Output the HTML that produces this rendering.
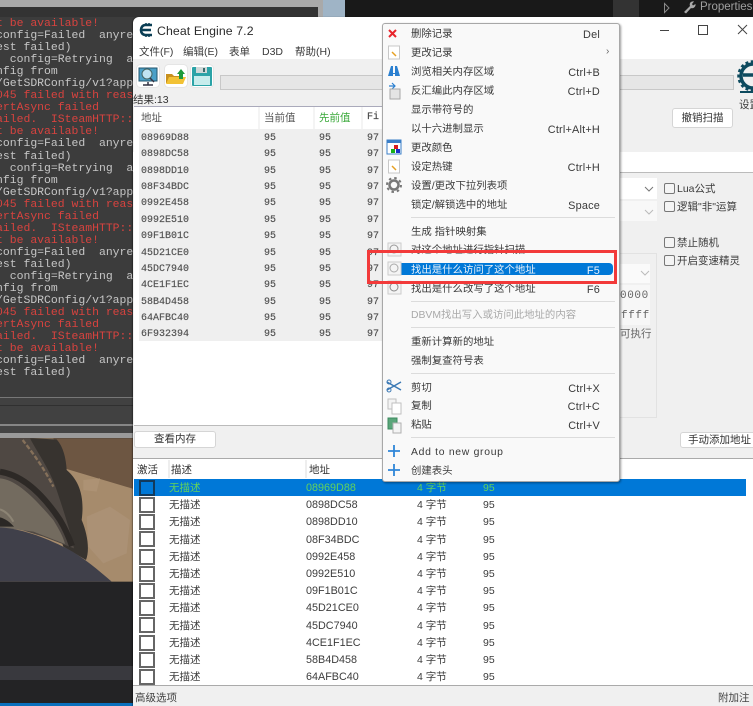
<!DOCTYPE html>
<html><head><meta charset="utf-8"><style>
html,body{margin:0;padding:0;width:753px;height:706px;overflow:hidden;background:#222}
#r{position:relative;width:753px;height:706px;overflow:hidden;filter:blur(.35px);font-family:"Liberation Sans","Noto Sans CJK SC",sans-serif;font-size:10.5px;color:#333}
#r div,#r span.a{position:absolute;white-space:pre}
.t{left:-4px;margin-top:2px;font:11.45px/12px "Liberation Mono",monospace;color:#c6c6c6}
.e{color:#d8433f}
.m{margin-top:2px;font:10px/12px "Liberation Mono",monospace;color:#505050;-webkit-text-stroke:.15px #505050}
.mi{left:411px;margin-top:4px;line-height:14px;color:#3a3a3a;font-size:10.4px}
.ms{right:153px;margin-top:4px;line-height:14px;color:#3a3a3a;font-size:10.9px;letter-spacing:.2px}
.sep{left:411px;width:204px;height:1px;background:#dcdcdc}
.cb{left:139px;width:12px;height:12px;border:2px solid #666;background:#fff}
.d{left:169px;margin-top:1px;line-height:14px;color:#3c3c3c}
.ad{left:306px;margin-top:1px;line-height:14px;color:#3c3c3c;font-size:10.8px}
.ty{left:417px;margin-top:1px;line-height:14px;color:#3c3c3c}
.v{left:483px;margin-top:1px;line-height:14px;color:#3c3c3c}
.btn{background:#fff;border:1px solid #d5d5d5;border-radius:3px;text-align:center;box-sizing:border-box;color:#333}
.ck{left:664px;width:9px;height:9px;border:1px solid #777;border-radius:2px;background:#f4f4f4}
.lb{left:677px;margin-top:1px;line-height:14px;color:#3c3c3c}
.hs{width:2px;background:#f4f4f4}
</style></head><body><div id="r">
<!-- desktop background -->
<div style="left:0;top:0;width:323px;height:7px;background:#a9a9a9"></div>
<div style="left:0;top:7px;width:318px;height:10px;background:#333"></div>
<div style="left:318px;top:7px;width:5px;height:10px;background:#a9a9a9"></div>
<div style="left:323px;top:0;width:22px;height:17px;background:#9fb4c6"></div>
<div style="left:345px;top:0;width:408px;height:17px;background:#191919"></div>
<div style="left:613px;top:0;width:26px;height:17px;background:#333"></div>
<svg style="position:absolute;left:663px;top:2px" width="8" height="12"><path d="M1.500 1.500L6 6L1.500 10.500Z" fill="none" stroke="#8a8a8a"/></svg>
<svg style="position:absolute;left:682px;top:0" width="15" height="14"><path d="M2 12L8 6C7 3 9 1 12 1.500L10 4L11 5.500L13.500 4C14 7 11 9 9 8L4 13.500Z" fill="#a8a8a8"/></svg>
<div style="left:700px;top:0;font-size:11.5px;line-height:14px;color:#a0a0a0">Properties</div>
<div style="left:0;top:17px;width:318px;height:380px;background:#3c3c3c"></div>
<div class="t e" style="top:16px">t be available!</div>
<div class="t" style="top:28px">config=Failed  anyre</div>
<div class="t" style="top:40px">est failed)</div>
<div class="t" style="top:52px">  config=Retrying  a</div>
<div class="t" style="top:64px">nfig from</div>
<div class="t" style="top:76px">/GetSDRConfig/v1?app</div>
<div class="t e" style="top:88px">045 failed with reas</div>
<div class="t e" style="top:100px">ertAsync failed</div>
<div class="t e" style="top:112px">ailed.  ISteamHTTP::</div>
<div class="t e" style="top:124px">t be available!</div>
<div class="t" style="top:136px">config=Failed  anyre</div>
<div class="t" style="top:149px">est failed)</div>
<div class="t" style="top:161px">  config=Retrying  a</div>
<div class="t" style="top:173px">nfig from</div>
<div class="t" style="top:185px">/GetSDRConfig/v1?app</div>
<div class="t e" style="top:197px">045 failed with reas</div>
<div class="t e" style="top:209px">ertAsync failed</div>
<div class="t e" style="top:221px">ailed.  ISteamHTTP::</div>
<div class="t e" style="top:233px">t be available!</div>
<div class="t" style="top:245px">config=Failed  anyre</div>
<div class="t" style="top:257px">est failed)</div>
<div class="t" style="top:269px">  config=Retrying  a</div>
<div class="t" style="top:281px">nfig from</div>
<div class="t" style="top:293px">/GetSDRConfig/v1?app</div>
<div class="t e" style="top:305px">045 failed with reas</div>
<div class="t e" style="top:317px">ertAsync failed</div>
<div class="t e" style="top:329px">ailed.  ISteamHTTP::</div>
<div class="t e" style="top:341px">t be available!</div>
<div class="t" style="top:353px">config=Failed  anyre</div>
<div class="t" style="top:365px">est failed)</div>
<div style="left:0;top:397px;width:133px;height:1px;background:#777"></div>
<div style="left:0;top:398px;width:133px;height:26px;background:#414141"></div>
<div style="left:0;top:405px;width:133px;height:1px;background:#303030"></div>
<div style="left:0;top:424px;width:133px;height:2px;background:#868686"></div>
<div style="left:0;top:426px;width:133px;height:7px;background:#444"></div>
<div style="left:0;top:433px;width:133px;height:5px;background:#9a9a9a"></div>
<!-- photo: path coordinates in 3x units -->
<svg style="position:absolute;left:0;top:420px" width="135" height="180" viewBox="0 0 405 540">
<rect x="0" y="55" width="405" height="430" fill="#a68b6c"/>
<path d="M160 55H405V208L200 147Z" fill="#6d5642"/>
<path d="M250 180L300 175L290 215L250 210Z" fill="#ad9274"/>
<path d="M260 290L330 260L390 300L380 400L310 430L265 380Z" fill="#ab9175"/>
<path d="M90 55L170 58C190 80 198 115 200 150C235 180 255 225 245 300C262 340 270 390 258 420L190 380L100 120Z" fill="#37332f"/>
<path d="M0 55H90C120 110 150 150 170 210C190 270 210 330 222 385L130 350L0 310Z" fill="#4f4843"/>
<path d="M0 175C50 180 100 230 160 300C175 325 190 350 195 372L100 335L0 322Z" fill="#736b5f"/>
<path d="M0 155C70 165 130 225 180 300C198 330 208 355 216 378" fill="none" stroke="#2d2926" stroke-width="18"/>
<path d="M0 292C15 295 32 308 42 320L0 320Z" fill="#2b2825"/>
<path d="M0 268C20 275 32 290 40 305" fill="none" stroke="#8c8474" stroke-width="6"/>
<path d="M68 60C95 95 130 140 160 200" fill="none" stroke="#85705a" stroke-width="7" stroke-dasharray="14 6"/>
<path d="M0 322C60 325 130 350 200 385C250 412 295 450 335 485H0Z" fill="#40404a"/>
</svg>
<div style="left:0;top:582px;width:133px;height:124px;background:#232325"></div>
<div style="left:0;top:666px;width:133px;height:14px;background:#39393e"></div>
<div style="left:0;top:703px;width:133px;height:3px;background:#0a70bd"></div>
<!-- CE window -->
<div style="left:133px;top:17px;width:620px;height:689px;background:#fff;border-radius:6px 0 0 0;box-shadow:-1px 0 1px rgba(0,0,0,.35)"></div>
<svg style="position:absolute;left:139px;top:22px" width="15" height="16" viewBox="0 0 15 16">
<path d="M13 3H6.500C3.500 3 2 5.500 2 8s1.500 5 4.500 5H13M3 8H12" fill="none" stroke="#0b3f55" stroke-width="2.600"/>
<path d="M7 1v2M10 1v2M7 13v2M10 13v2" stroke="#0b3f55" stroke-width="1.500"/>
</svg>
<div style="left:157px;top:23px;font-size:12.3px;line-height:16px;color:#2b2b2b;letter-spacing:.1px">Cheat Engine 7.2</div>
<!-- caption buttons -->
<div style="left:660px;top:30px;width:9px;height:1px;background:#444"></div>
<div style="left:698px;top:25px;width:8px;height:8px;border:1px solid #444"></div>
<svg style="position:absolute;left:737px;top:24px" width="11" height="11"><path d="M1 1L10 10M10 1L1 10" stroke="#444" stroke-width="1"/></svg>
<!-- menu bar -->
<div style="left:139px;top:45px;line-height:14px;color:#3a3a3a">文件(F)</div>
<div style="left:183px;top:45px;line-height:14px;color:#3a3a3a">编辑(E)</div>
<div style="left:229px;top:45px;line-height:14px;color:#3a3a3a">表单</div>
<div style="left:262px;top:45px;line-height:14px;color:#3a3a3a">D3D</div>
<div style="left:295px;top:45px;line-height:14px;color:#3a3a3a">帮助(H)</div>
<!-- toolbar panel -->
<div style="left:133px;top:59px;width:620px;height:93px;background:#f0f0f0"></div>
<div style="left:133px;top:172px;width:620px;height:286px;background:#f0f0f0"></div>
<div style="left:137px;top:65px;width:22px;height:22px;background:#fff;border-radius:3px;box-shadow:0 0 1px #aaa"></div>
<div style="left:165px;top:65px;width:22px;height:22px;background:#fff;border-radius:3px;box-shadow:0 0 1px #aaa"></div>
<div style="left:191px;top:65px;width:22px;height:22px;background:#fff;border-radius:3px;box-shadow:0 0 1px #aaa"></div>
<svg style="position:absolute;left:137px;top:65px" width="76" height="22" viewBox="0 0 76 22">
<rect x="2" y="3" width="18" height="13" fill="#4aa0c8" stroke="#23566e"/>
<circle cx="10" cy="9" r="5" fill="#bfe3f2" stroke="#466"/>
<path d="M13 13L17 17M11 17V20M6 20H16" stroke="#334" stroke-width="1.500"/>
<path d="M29 9H35L37 11H45V18H29Z" fill="#c8901e"/>
<path d="M29 19L32 12H49L46 19Z" fill="#f2c235"/>
<path d="M44 4L48 9H46V14H42V9H40Z" fill="#1f9a3c"/>
<rect x="55" y="2" width="20" height="19" rx="1" fill="#2ba3a7"/>
<rect x="59" y="2" width="11" height="6" fill="#cfd8d8"/>
<rect x="66" y="3" width="2" height="4" fill="#39686a"/>
<rect x="57" y="11" width="16" height="9" fill="#c7ecec"/>
</svg>
<div style="left:220px;top:75px;width:512px;height:13px;background:#e6e6e6;border:1px solid #c8c8c8"></div>
<svg style="position:absolute;left:737px;top:60px" width="16" height="35" viewBox="0 0 16 35">
<circle cx="16" cy="16" r="12" fill="none" stroke="#0d4a5e" stroke-width="3.500"/>
<circle cx="16" cy="16" r="14.500" fill="none" stroke="#0d4a5e" stroke-width="2.500" stroke-dasharray="3 2.500"/>
<path d="M6 15H16" stroke="#0d4a5e" stroke-width="3.500"/>
<path d="M3 32H16" stroke="#0d4a5e" stroke-width="2"/>
</svg>
<div style="left:739px;top:98px;line-height:14px;color:#3a3a3a">设置</div>
<div class="btn" style="left:672px;top:108px;width:61px;height:20px;line-height:18px">撤销扫描</div>
<div style="left:133px;top:93px;line-height:14px;color:#333">结果:13</div>
<!-- found list -->
<div style="left:134px;top:106px;width:486px;height:318px;background:#fff;border-top:1px solid #aab;border-bottom:1px solid #bbb"></div>
<div style="left:139px;top:129px;width:481px;height:212px;background:#efefef"></div>
<div class="hs" style="left:258px;top:107px;height:22px"></div>
<div class="hs" style="left:313px;top:107px;height:22px"></div>
<div class="hs" style="left:361px;top:107px;height:22px"></div>
<div style="left:141px;top:111px;line-height:14px;color:#555">地址</div>
<div style="left:264px;top:111px;line-height:14px;color:#555">当前值</div>
<div style="left:319px;top:111px;line-height:14px;color:#38a838">先前值</div>
<div class="m" style="left:367px;top:110px;color:#444">Fi</div>
<div class="m" style="left:141px;top:131px">08969D88</div><div class="m" style="left:264px;top:131px">95</div><div class="m" style="left:319px;top:131px">95</div><div class="m" style="left:367px;top:131px">97</div>
<div class="m" style="left:141px;top:147px">0898DC58</div><div class="m" style="left:264px;top:147px">95</div><div class="m" style="left:319px;top:147px">95</div><div class="m" style="left:367px;top:147px">97</div>
<div class="m" style="left:141px;top:164px">0898DD10</div><div class="m" style="left:264px;top:164px">95</div><div class="m" style="left:319px;top:164px">95</div><div class="m" style="left:367px;top:164px">97</div>
<div class="m" style="left:141px;top:180px">08F34BDC</div><div class="m" style="left:264px;top:180px">95</div><div class="m" style="left:319px;top:180px">95</div><div class="m" style="left:367px;top:180px">97</div>
<div class="m" style="left:141px;top:196px">0992E458</div><div class="m" style="left:264px;top:196px">95</div><div class="m" style="left:319px;top:196px">95</div><div class="m" style="left:367px;top:196px">97</div>
<div class="m" style="left:141px;top:213px">0992E510</div><div class="m" style="left:264px;top:213px">95</div><div class="m" style="left:319px;top:213px">95</div><div class="m" style="left:367px;top:213px">97</div>
<div class="m" style="left:141px;top:229px">09F1B01C</div><div class="m" style="left:264px;top:229px">95</div><div class="m" style="left:319px;top:229px">95</div><div class="m" style="left:367px;top:229px">97</div>
<div class="m" style="left:141px;top:246px">45D21CE0</div><div class="m" style="left:264px;top:246px">95</div><div class="m" style="left:319px;top:246px">95</div><div class="m" style="left:367px;top:246px">97</div>
<div class="m" style="left:141px;top:262px">45DC7940</div><div class="m" style="left:264px;top:262px">95</div><div class="m" style="left:319px;top:262px">95</div><div class="m" style="left:367px;top:262px">97</div>
<div class="m" style="left:141px;top:278px">4CE1F1EC</div><div class="m" style="left:264px;top:278px">95</div><div class="m" style="left:319px;top:278px">95</div><div class="m" style="left:367px;top:278px">97</div>
<div class="m" style="left:141px;top:295px">58B4D458</div><div class="m" style="left:264px;top:295px">95</div><div class="m" style="left:319px;top:295px">95</div><div class="m" style="left:367px;top:295px">97</div>
<div class="m" style="left:141px;top:311px">64AFBC40</div><div class="m" style="left:264px;top:311px">95</div><div class="m" style="left:319px;top:311px">95</div><div class="m" style="left:367px;top:311px">97</div>
<div class="m" style="left:141px;top:327px">6F932394</div><div class="m" style="left:264px;top:327px">95</div><div class="m" style="left:319px;top:327px">95</div><div class="m" style="left:367px;top:327px">97</div>
<!-- right panel -->
<div style="left:620px;top:152px;width:133px;height:20px;background:#fff"></div>
<div style="left:620px;top:172px;width:133px;height:1px;background:#bbb"></div>
<div style="left:620px;top:178px;width:37px;height:21px;background:#fff"></div>
<div style="left:620px;top:201px;width:37px;height:20px;background:#f8f8f8"></div>
<svg style="position:absolute;left:643px;top:186px" width="12" height="30"><path d="M2 1L6 5L10 1" fill="none" stroke="#777"/><path d="M2 24L6 28L10 24" fill="none" stroke="#bbb"/></svg>
<div class="ck" style="top:183px"></div><div class="lb" style="top:181px">Lua公式</div>
<div class="ck" style="top:201px"></div><div class="lb" style="top:199px">逻辑"非"运算</div>
<div class="ck" style="top:237px"></div><div class="lb" style="top:235px">禁止随机</div>
<div class="ck" style="top:255px"></div><div class="lb" style="top:253px">开启变速精灵</div>
<div style="left:620px;top:253px;width:37px;height:165px;border:1px solid #e2e2e2;border-left:0;box-sizing:border-box"></div>
<div style="left:620px;top:264px;width:30px;height:19px;background:#fafafa"></div>
<svg style="position:absolute;left:640px;top:270px" width="10" height="8"><path d="M1 1L5 5L9 1" fill="none" stroke="#bbb"/></svg>
<div style="left:620px;top:285px;width:30px;height:20px;background:#f7f7f7"></div>
<div style="left:620px;top:305px;width:30px;height:20px;background:#f7f7f7"></div>
<div style="left:620px;top:289px;font:11px/14px 'Liberation Mono',monospace;color:#666;letter-spacing:.6px">0000</div>
<div style="left:621px;top:309px;font:11px/14px 'Liberation Mono',monospace;color:#666;letter-spacing:.6px">ffff</div>
<div style="left:620px;top:327px;line-height:14px;color:#666">可执行</div>
<div class="btn" style="left:134px;top:431px;width:82px;height:17px;line-height:15px">查看内存</div>
<div class="btn" style="left:680px;top:432px;width:76px;height:16px;line-height:14px;text-align:left;padding-left:7px">手动添加地址</div>
<!-- lower list -->
<div style="left:133px;top:458px;width:620px;height:1px;background:#aaa"></div>
<div class="hs" style="left:168px;top:460px;height:18px;background:#eee"></div>
<div class="hs" style="left:305px;top:460px;height:18px;background:#eee"></div>
<div style="left:137px;top:463px;line-height:14px;color:#333">激活</div>
<div style="left:171px;top:463px;line-height:14px;color:#333">描述</div>
<div style="left:309px;top:463px;line-height:14px;color:#333">地址</div>
<div style="left:134px;top:479px;width:612px;height:17px;background:#0078d7"></div>
<div class="cb" style="top:480px;background:#0078d7;border-color:#123a5c"></div>
<div class="d" style="top:480px;color:#63d35c">无描述</div><div class="ad" style="top:480px;color:#63d35c">08969D88</div><div class="ty" style="top:480px;color:#63d35c">4 字节</div><div class="v" style="top:480px;color:#63d35c">95</div>
<div class="cb" style="top:497px"></div><div class="d" style="top:497px">无描述</div><div class="ad" style="top:497px">0898DC58</div><div class="ty" style="top:497px">4 字节</div><div class="v" style="top:497px">95</div>
<div class="cb" style="top:514px"></div><div class="d" style="top:514px">无描述</div><div class="ad" style="top:514px">0898DD10</div><div class="ty" style="top:514px">4 字节</div><div class="v" style="top:514px">95</div>
<div class="cb" style="top:531px"></div><div class="d" style="top:532px">无描述</div><div class="ad" style="top:532px">08F34BDC</div><div class="ty" style="top:532px">4 字节</div><div class="v" style="top:532px">95</div>
<div class="cb" style="top:549px"></div><div class="d" style="top:549px">无描述</div><div class="ad" style="top:549px">0992E458</div><div class="ty" style="top:549px">4 字节</div><div class="v" style="top:549px">95</div>
<div class="cb" style="top:566px"></div><div class="d" style="top:566px">无描述</div><div class="ad" style="top:566px">0992E510</div><div class="ty" style="top:566px">4 字节</div><div class="v" style="top:566px">95</div>
<div class="cb" style="top:583px"></div><div class="d" style="top:583px">无描述</div><div class="ad" style="top:583px">09F1B01C</div><div class="ty" style="top:583px">4 字节</div><div class="v" style="top:583px">95</div>
<div class="cb" style="top:600px"></div><div class="d" style="top:600px">无描述</div><div class="ad" style="top:600px">45D21CE0</div><div class="ty" style="top:600px">4 字节</div><div class="v" style="top:600px">95</div>
<div class="cb" style="top:617px"></div><div class="d" style="top:618px">无描述</div><div class="ad" style="top:618px">45DC7940</div><div class="ty" style="top:618px">4 字节</div><div class="v" style="top:618px">95</div>
<div class="cb" style="top:635px"></div><div class="d" style="top:635px">无描述</div><div class="ad" style="top:635px">4CE1F1EC</div><div class="ty" style="top:635px">4 字节</div><div class="v" style="top:635px">95</div>
<div class="cb" style="top:652px"></div><div class="d" style="top:652px">无描述</div><div class="ad" style="top:652px">58B4D458</div><div class="ty" style="top:652px">4 字节</div><div class="v" style="top:652px">95</div>
<div class="cb" style="top:669px"></div><div class="d" style="top:669px">无描述</div><div class="ad" style="top:669px">64AFBC40</div><div class="ty" style="top:669px">4 字节</div><div class="v" style="top:669px">95</div>
<div style="left:133px;top:685px;width:620px;height:1px;background:#aaa"></div>
<div style="left:133px;top:686px;width:620px;height:20px;background:#f0f0f0"></div>
<div style="left:135px;top:691px;line-height:14px;color:#444">高级选项</div>
<div style="left:718px;top:691px;line-height:14px;color:#444">附加注</div>
<!-- context menu -->
<div style="left:382px;top:23px;width:238px;height:459px;background:#f9f9f9;border:1px solid #a8a8a8;border-radius:3px;box-sizing:border-box;box-shadow:1px 1px 2px rgba(0,0,0,.4)"></div>
<div class="mi" style="top:24px">删除记录</div><div class="ms" style="top:24px">Del</div>
<div class="mi" style="top:43px">更改记录</div><div style="left:606px;top:46px;line-height:12px;color:#666;font-size:10px">&#8250;</div>
<div class="mi" style="top:62px">浏览相关内存区域</div><div class="ms" style="top:62px">Ctrl+B</div>
<div class="mi" style="top:81px">反汇编此内存区域</div><div class="ms" style="top:81px">Ctrl+D</div>
<div class="mi" style="top:100px">显示带符号的</div>
<div class="mi" style="top:119px">以十六进制显示</div><div class="ms" style="top:119px">Ctrl+Alt+H</div>
<div class="mi" style="top:138px">更改颜色</div>
<div class="mi" style="top:157px">设定热键</div><div class="ms" style="top:157px">Ctrl+H</div>
<div class="mi" style="top:176px">设置/更改下拉列表项</div>
<div class="mi" style="top:195px">锁定/解锁选中的地址</div><div class="ms" style="top:195px">Space</div>
<div class="sep" style="top:217px"></div>
<div class="mi" style="top:222px">生成 指针映射集</div>
<div class="mi" style="top:240px">对这个地址进行指针扫描</div>
<div style="left:398px;top:263px;width:215px;height:12px;background:#0078d7;border-radius:4px"></div>
<div class="mi" style="top:260px;color:#e8f2fb">找出是什么访问了这个地址</div><div class="ms" style="top:260px;color:#e8f2fb">F5</div>
<div class="mi" style="top:279px">找出是什么改写了这个地址</div><div class="ms" style="top:279px">F6</div>
<div class="sep" style="top:301px"></div>
<div class="mi" style="top:305px;color:#a9a9a9">DBVM找出写入或访问此地址的内容</div>
<div class="sep" style="top:327px"></div>
<div class="mi" style="top:332px">重新计算新的地址</div>
<div class="mi" style="top:351px">强制复查符号表</div>
<div class="sep" style="top:373px"></div>
<div class="mi" style="top:378px">剪切</div><div class="ms" style="top:378px">Ctrl+X</div>
<div class="mi" style="top:396px">复制</div><div class="ms" style="top:396px">Ctrl+C</div>
<div class="mi" style="top:415px">粘贴</div><div class="ms" style="top:415px">Ctrl+V</div>
<div class="sep" style="top:437px"></div>
<div class="mi" style="top:442px;letter-spacing:.7px">Add to new group</div>
<div class="mi" style="top:461px">创建表头</div>
<!-- menu icons -->
<svg style="position:absolute;left:385px;top:24px" width="20" height="456" viewBox="0 0 20 456">
<path d="M4 6L11 13M11 6L4 13" stroke="#e8252c" stroke-width="2"/>
<rect x="3.500" y="22" width="11" height="13" fill="#fff" stroke="#c8c8c8"/><path d="M7 28L11 32" stroke="#e6a023" stroke-width="1.500"/>
<path d="M3 52L6 42H8V49H10V42H12L15 52H10V50H8V52Z" fill="#2a7fd0"/>
<path d="M4 62H10M7 59L10 62L7 65" fill="none" stroke="#2a7fd0" stroke-width="1.200"/>
<rect x="5" y="65" width="10" height="10" fill="#e4e4e4" stroke="#a8a8a8"/>
<rect x="2" y="116" width="14" height="14" fill="#fff" stroke="#3b7fc8"/>
<rect x="2" y="116" width="14" height="3" fill="#3b7fc8"/>
<rect x="9" y="121" width="4" height="4" fill="#d81e1e"/><rect x="6" y="125" width="4" height="4" fill="#18b018"/><rect x="11" y="125" width="4" height="4" fill="#1a2ec8"/>
<rect x="3.500" y="136" width="11" height="13" fill="#fff" stroke="#c8c8c8"/><path d="M7 142L11 146" stroke="#e6a023" stroke-width="1.500"/>
<circle cx="9" cy="161" r="4.500" fill="none" stroke="#777" stroke-width="2.500"/>
<circle cx="9" cy="161" r="7" fill="none" stroke="#777" stroke-width="2" stroke-dasharray="2.500 3"/>
<rect x="3" y="219" width="13" height="13" fill="#f4f4f4" stroke="#ccc"/><circle cx="9" cy="225" r="4" fill="none" stroke="#999"/>
<rect x="3" y="238" width="13" height="13" fill="#f4f4f4" stroke="#ccc"/><circle cx="9" cy="244" r="4" fill="none" stroke="#aaa"/>
<rect x="3" y="257" width="13" height="13" fill="#f4f4f4" stroke="#ccc"/><circle cx="9" cy="263" r="4" fill="none" stroke="#888"/>
<path d="M2 358L16 366M2 366L16 358" stroke="#3b79b5" stroke-width="1.500"/><circle cx="4" cy="358" r="2" fill="none" stroke="#3b79b5"/><circle cx="4" cy="366" r="2" fill="none" stroke="#3b79b5"/>
<rect x="3" y="375" width="8" height="10" fill="#f4f4f4" stroke="#c0c0c0"/><rect x="7" y="379" width="9" height="11" fill="#fff" stroke="#c0c0c0"/>
<rect x="3" y="394" width="9" height="11" fill="#5aa67a" stroke="#3d8a60"/><rect x="8" y="399" width="8" height="10" fill="#f4f4f4" stroke="#b0b0b0"/>
<path d="M9 421V433M3 427H15" stroke="#2f86d8" stroke-width="1.800"/>
<path d="M9 440V452M3 446H15" stroke="#2f86d8" stroke-width="1.800"/>
</svg>
<!-- red annotation -->
<div style="left:367px;top:250px;width:250px;height:34px;border:3px solid #f23a3a;box-sizing:border-box"></div>
</div></body></html>
